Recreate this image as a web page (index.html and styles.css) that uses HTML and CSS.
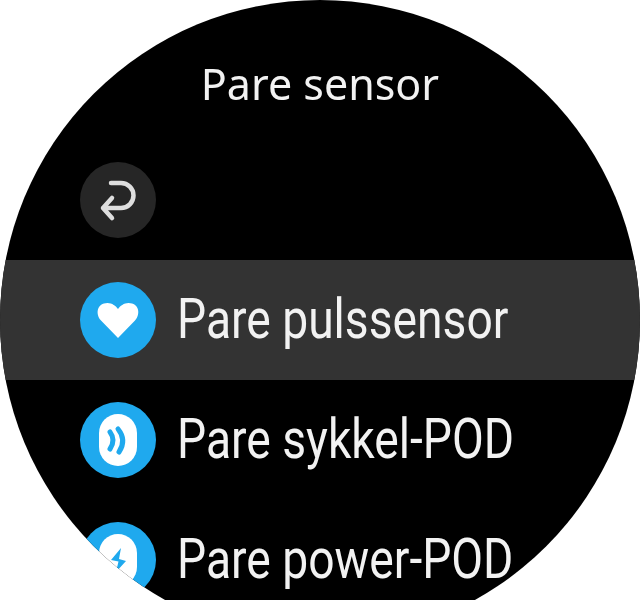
FILE: index.html
```html
<!DOCTYPE html>
<html lang="no">
<head>
<meta charset="utf-8">
<title>Pare sensor</title>
<link rel="stylesheet" href="styles.css">
</head>
<body>
<main class="watch">
  <h1 class="title">Pare sensor</h1>
  <div class="row">
    <svg class="icon" viewBox="0 0 76 76" aria-hidden="true">
      <circle cx="38" cy="38" r="38" fill="#262626"/>
      <path d="M31 21 H41 A12.5 12.5 0 0 1 41 46 H23 M32 36 L23 46 L32 56" fill="none" stroke="#dedede" stroke-width="4.5" stroke-linecap="round" stroke-linejoin="round"/>
    </svg>
  </div>
  <div class="row selected">
    <svg class="icon" viewBox="0 0 76 76" aria-hidden="true">
      <circle cx="38" cy="38" r="38" fill="#1fa9ee"/>
      <path d="M38 56 L21 38.500 C15 32 17 21 27.500 21 C32 21 36 24 38 27 C40 24 44 21 48.500 21 C59 21 61 32 55 38.500 Z" fill="#fff"/>
    </svg>
    <span class="label">Pare pulssensor</span>
  </div>
  <div class="row">
    <svg class="icon" viewBox="0 0 76 76" aria-hidden="true">
      <circle cx="38" cy="38" r="38" fill="#1fa9ee"/>
      <rect x="19" y="12" width="38" height="52" rx="19" fill="#fff"/>
      <path d="M30 30 Q36 38 30 47 M38 27 Q47 38 39 50" fill="none" stroke="#1fa9ee" stroke-width="5" stroke-linecap="round"/>
    </svg>
    <span class="label">Pare sykkel-POD</span>
  </div>
  <div class="row last">
    <svg class="icon" viewBox="0 0 76 76" aria-hidden="true">
      <circle cx="38" cy="38" r="38" fill="#1fa9ee"/>
      <rect x="19" y="12" width="38" height="52" rx="19" fill="#fff"/>
      <path d="M41 26 L31 38 L38.500 39.500 L36 50 L46 39 L39 37 Z" fill="#1fa9ee"/>
    </svg>
    <span class="label">Pare power-POD</span>
  </div>
</main>
</body>
</html>
```
FILE: styles.css
```css
html, body {
  margin: 0;
  height: 600px;
  overflow: hidden;
  background: #fff;
}

.watch {
  width: 640px;
  height: 600px;
  clip-path: circle(320px at 320px 320px);
  background: #000;
  color: #f2f2f2;
  display: flex;
  flex-direction: column;
}

.title {
  height: 140px;
  margin: 0;
  padding-top: 57px;
  box-sizing: border-box;
  text-align: center;
  font: 400 43px/54px "Noto Sans", sans-serif;
  filter: blur(0.5px);
}

.row {
  flex: 0 0 120px;
  box-sizing: border-box;
  display: flex;
  align-items: center;
  gap: 21px;
  padding-left: 80px;
}

.last {
  flex-basis: 100px;
  align-items: flex-start;
  padding-top: 22px;
}

.selected {
  background: #333;
}

.icon {
  width: 76px;
  height: 76px;
  flex: none;
  filter: blur(0.5px);
}

.label {
  display: inline-block;
  margin-bottom: 2px;
  font: 400 56px/64px "Roboto", sans-serif;
  white-space: nowrap;
  transform: scaleX(0.825);
  transform-origin: left center;
  filter: blur(0.5px);
}

.last .label {
  margin-top: 5px;
  margin-bottom: 0;
}
```
